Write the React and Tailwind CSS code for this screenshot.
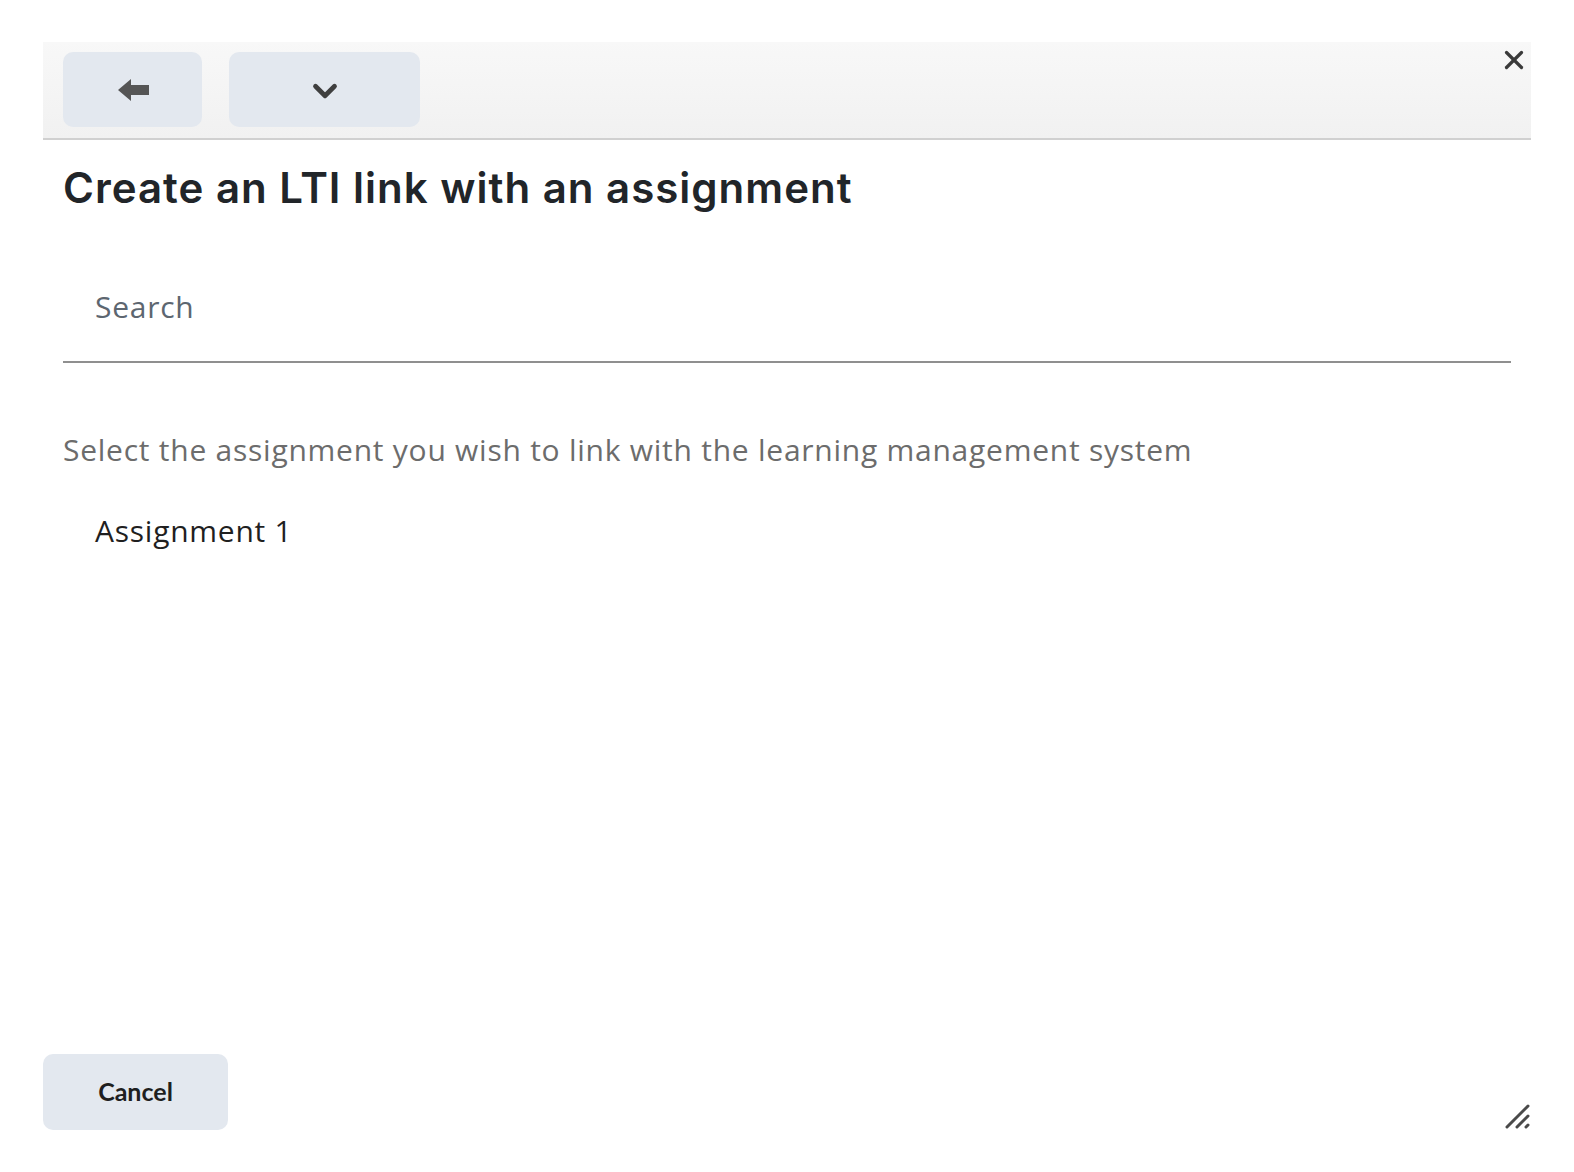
import { ChevronDown, X } from 'lucide-react'

function BackArrow() {
  return (
    <svg width="34" height="26" viewBox="0 0 34 26">
      <path d="M2 13 L15 2 L15 8 L33 8 L33 18 L15 18 L15 24 Z" fill="#555555" />
    </svg>
  )
}

function Grip() {
  return (
    <svg width="28" height="28" viewBox="0 0 28 28">
      <line x1="3" y1="25" x2="24" y2="4" stroke="#4a4a4a" strokeWidth="3" strokeLinecap="round" />
      <line x1="13" y1="25" x2="24" y2="14" stroke="#4a4a4a" strokeWidth="3" strokeLinecap="round" />
      <line x1="22" y1="25" x2="24" y2="23" stroke="#4a4a4a" strokeWidth="3" strokeLinecap="round" />
    </svg>
  )
}

export default function App() {
  return (
    <div className="h-[1172px] w-[1574px] bg-white pt-[42px] pl-[43px]">
      <div className="relative flex h-[1088px] w-[1488px] flex-col">
        <div className="flex h-[98px] items-start gap-[27px] border-b-2 border-[#d0d0d0] bg-gradient-to-b from-[#f8f8f8] to-[#f1f1f1] px-[20px] pt-[10px]">
          <button className="flex h-[75px] w-[139px] items-center justify-center rounded-[10px] bg-[#e3e8ef]">
            <BackArrow />
          </button>
          <button className="flex h-[75px] w-[191px] items-center justify-center rounded-[10px] bg-[#e3e8ef]">
            <ChevronDown size={38} strokeWidth={3} color="#3f3f3f" className="mt-[3px]" />
          </button>
        </div>
        <button className="absolute -right-[2px] -top-[1px] p-1">
          <X size={30} strokeWidth={2.6} color="#3a3a3a" />
        </button>

        <div className="flex flex-1 flex-col px-[20px]">
          <h1 className="mt-[20px] text-[42px] font-semibold leading-[56px] tracking-[1px] text-[#212529] [font-family:Inter,'Open_Sans',sans-serif]">
            Create an LTI link with an assignment
          </h1>
          <div className="mt-[54px] flex h-[93px] items-center border-b-2 border-[#8f8f8f] pl-[32px] pb-[18px]">
            <span className="text-[30px] tracking-[0.75px] text-[#5d6670] [font-family:'Open_Sans',sans-serif]">Search</span>
          </div>
          <p className="mt-[67px] text-[30px] leading-[40px] tracking-[0.75px] text-[#6c6c6c] [font-family:'Open_Sans',sans-serif]">
            Select the assignment you wish to link with the learning management system
          </p>
          <p className="mt-[41px] pl-[32px] text-[30px] leading-[40px] tracking-[0.75px] text-[#1f1f1f] [font-family:'Open_Sans',sans-serif]">
            Assignment 1
          </p>
        </div>

        <div className="flex items-end justify-between">
          <button className="flex h-[76px] w-[185px] items-center justify-center rounded-[10px] bg-[#e3e8ef] text-[25px] font-bold text-[#1f1f1f] [font-family:Lato,sans-serif]">
            Cancel
          </button>
          <div className="-mr-[1px]">
            <Grip />
          </div>
        </div>
      </div>
    </div>
  )
}
